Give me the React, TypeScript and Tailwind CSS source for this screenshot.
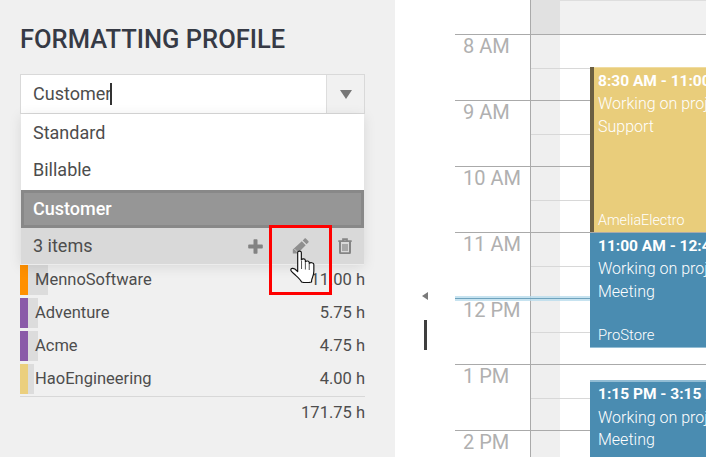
const rows = [
  { name: "MennoSoftware", hours: "11.00 h", color: "bg-[#ff9000]", gray: "w-[28px]" },
  { name: "Adventure", hours: "5.75 h", color: "bg-[#8a5aa8]", gray: "w-[18px]" },
  { name: "Acme", hours: "4.75 h", color: "bg-[#8a5aa8]", gray: "w-[18px]" },
  { name: "HaoEngineering", hours: "4.00 h", color: "bg-[#ebcf7e]", gray: "w-[14px]" },
];

const hours = ["8 AM", "9 AM", "10 AM", "11 AM", "12 PM", "1 PM", "2 PM"];

function Hand() {
  return (
    <svg viewBox="0 0 26 33" preserveAspectRatio="none" className="absolute left-[290px] top-[250px] w-[25px] h-[33px] z-30">
      <path
        d="M8 2.500C8 .6 11.800 .6 11.800 2.500V10C12.500 8.500 15.800 8.500 16 10.500V12C16.800 10.500 19.700 10.700 20 12.500V13.500C21 12.200 24.800 12.500 24.800 14.500V21C24.800 25 23.500 27 22.800 29C22.500 30 22.400 31 22.400 32C19 32.800 15 32.800 12 32C11 29.500 8.500 27.500 5.500 25C3.500 23.300 .8 21.500 .8 19.800C1 18 3.500 18 5 19L8 21.500Z"
        fill="#fff"
        stroke="#111"
        strokeWidth="1.200"
        strokeLinejoin="round"
      />
      <path d="M12 11v8M16 12.500v7M20 14v6" stroke="#222" strokeWidth="0.800" fill="none" />
    </svg>
  );
}

function PlusIcon() {
  return (
    <svg viewBox="0 0 15 15" className="w-[15px] h-[15px] shrink-0">
      <path d="M5.500 1a.8.8 0 0 1 .8-.8h2.400a.8.8 0 0 1 .8.8v4.500H14a.8.8 0 0 1 .8.8v2.400a.8.8 0 0 1-.8.8H9.500V14a.8.8 0 0 1-.8.8H6.300a.8.8 0 0 1-.8-.8V9.500H1a.8.8 0 0 1-.8-.8V6.300a.8.8 0 0 1 .8-.8h4.500Z" fill="#828282" />
    </svg>
  );
}

function PencilIcon() {
  return (
    <svg viewBox="0 0 17 16" className="w-[17px] h-[16px] shrink-0">
      <path d="M12.400 .7c.5-.5 1.200-.5 1.700 0l2.200 2.200c.5.5.5 1.200 0 1.700l-1.700 1.700-3.900-3.900zM9.800 3.300l3.900 3.900-8.200 8.200H.8v-3.900z" fill="#8f8f8f" />
      <path d="M2.300 10.900l3.900 3.900" stroke="#d9d9d9" strokeWidth="0.800" />
    </svg>
  );
}

function TrashIcon() {
  return (
    <svg viewBox="0 0 14 16" className="w-[14px] h-[16px] shrink-0">
      <path d="M.3 3.200h13.400M5 3V1.200h4V3" stroke="#858585" strokeWidth="1.700" fill="none" />
      <path d="M2 4v10.200c0 .6.500 1 1 1h8c.5 0 1-.4 1-1V4" stroke="#858585" strokeWidth="2" fill="none" />
      <path d="M5 6v7M7 6v7M9 6v7" stroke="#858585" strokeWidth="1.200" fill="none" />
    </svg>
  );
}

function Sidebar() {
  return (
    <div className="w-[395px] shrink-0 bg-[#f0f0f0] pl-[20px] pr-[30px] pt-[25px] h-full">
      <h1 className="text-[25.500px] leading-[28px] font-medium text-[#363a45] whitespace-nowrap">FORMATTING PROFILE</h1>
      <div className="mt-[21px] relative">
        <div className="flex h-[40px] border border-[#d9d9d9] bg-white">
          <div className="flex-1 pl-[12px] pb-[2px] flex items-center text-[18px] text-[#4d4d4d]">
            Customer<span className="w-[2px] h-[22px] bg-[#333] -ml-px mt-[2px]" />
          </div>
          <div className="w-[38px] border-l border-[#dddddd] bg-[#f1f1f1] flex items-center justify-center">
            <div className="w-0 h-0 border-l-[6px] border-r-[6px] border-t-[9px] border-l-transparent border-r-transparent border-t-[#777]" />
          </div>
        </div>
        <div className="absolute left-[1px] right-[1px] top-[40px] z-10 shadow-[0_2px_12px_rgba(0,0,0,0.10)] text-[18px] text-[#4d4d4d]">
          <div className="bg-white h-[76px]">
            <div className="h-[37px] pl-[12px] flex items-center">Standard</div>
            <div className="h-[36px] pl-[12px] flex items-center">Billable</div>
          </div>
          <div className="h-[38px] bg-[#969696] border-[3px] border-[#888888] pl-[9px] pb-[2px] flex items-center text-white font-medium">Customer</div>
          <div className="h-[37px] bg-[#d9d9d9] border-b border-[#ececec] pl-[12px] flex items-center">
            <span className="flex-1 pb-[2px]">3 items</span>
            <PlusIcon />
            <div className="ml-[29px]"><PencilIcon /></div>
            <div className="ml-[29px] mr-[12px]"><TrashIcon /></div>
          </div>
        </div>
      </div>
      <div className="mt-[149px] text-[16.500px] text-[#4d4d4d]">
        {rows.map((r) => (
          <div key={r.name} className="flex items-center h-[33px]">
            <div className="relative h-[30px] w-[28px] mt-[1px]">
              <div className={`absolute inset-y-0 left-0 bg-[#dcdcdc] ${r.gray}`} />
              <div className={`absolute inset-y-0 left-0 w-[8px] ${r.color}`} />
            </div>
            <span className="-ml-[13px] relative flex-1 mt-[2px]">{r.name}</span>
            <span className="mt-[2px]">{r.hours}</span>
          </div>
        ))}
        <div className="border-t border-[#d8d8d8] text-right pt-[3px] mt-[1px] leading-[26px]">171.75 h</div>
      </div>
    </div>
  );
}

function Calendar() {
  return (
    <div className="flex-1 relative bg-white pl-[60px] h-full overflow-hidden">
      <div className="h-[34px] flex">
        <div className="w-[75px]" />
        <div className="w-[30px] bg-[#e1e1e1] border-l border-[#aaaaaa]" />
        <div className="flex-1 bg-[#f1f1f1] border-t border-[#dedede]" />
      </div>
      {hours.map((h) => (
        <div key={h} className="h-[66px] flex border-t border-[#aaaaaa]">
          <div className="w-[75px] pl-[8px] text-[20px] leading-[22px] text-[#b0b0b0]">{h}</div>
          <div className="flex-1 flex flex-col">
            {[0, 1].map((i) => (
              <div key={i} className="h-[33px] flex border-l border-[#aaaaaa]">
                <div className={`w-[29px] bg-[#efefef] ${i === 1 ? "border-t border-[#d8d8d8]" : ""}`} />
                <div className={`flex-1 ${i === 1 ? "border-t border-[#d8d8d8]" : ""}`} />
              </div>
            ))}
          </div>
        </div>
      ))}
      <div className="absolute left-[60px] right-0 top-[296px] h-[5px] bg-[#b9dcec]/80" />
      <div className="absolute left-[60px] right-0 top-[298px] h-px bg-[#6fa3bd]" />
      <div className="absolute left-[27px] top-[292px] w-0 h-0 border-y-[4px] border-r-[6px] border-y-transparent border-r-[#7a7a7a]" />
      <div className="absolute left-[29px] top-[320px] w-[3px] h-[30px] bg-[#3f3f3f]" />

      <div className="absolute left-[195px] right-0 top-[67px] h-[165px] bg-[#e9cd7b] border-l-[4px] border-[#6b5f42] text-white text-[16px] overflow-hidden whitespace-nowrap">
        <div className="h-px bg-[#f0dca0] -ml-[4px]" />
        <div className="pl-[4px] pt-[2px] font-bold text-[15.500px] leading-[23px]">8:30 AM - 11:00 AM</div>
        <div className="pl-[4px] leading-[23px] font-light -mt-px">Working on project</div>
        <div className="pl-[4px] leading-[23px] font-light">Support</div>
        <div className="pl-[4px] leading-[22px] mt-[71px] text-[14.300px] font-light">AmeliaElectro</div>
      </div>
      <div className="absolute left-[195px] right-0 top-[233px] h-[115px] bg-[#4a8cb1] border-b border-[#93bdd4] text-white text-[16px] overflow-hidden whitespace-nowrap">
        <div className="pl-[8px] pt-[2px] font-bold text-[15.500px] leading-[23px]">11:00 AM - 12:45 PM</div>
        <div className="pl-[8px] leading-[23px] font-light -mt-px">Working on project</div>
        <div className="pl-[8px] leading-[23px] font-light">Meeting</div>
        <div className="pl-[8px] leading-[22px] mt-[21px] text-[14.800px] font-light">ProStore</div>
      </div>
      <div className="absolute left-[195px] right-0 top-[380px] h-[90px] bg-[#4a8cb1] border-t-[2px] border-[#93bdd4] text-white text-[16px] overflow-hidden whitespace-nowrap">
        <div className="pl-[8px] pt-[1px] font-bold text-[15.500px] leading-[23px]">1:15 PM - 3:15 PM</div>
        <div className="pl-[8px] leading-[23px] font-light">Working on project</div>
        <div className="pl-[8px] leading-[22px] font-light">Meeting</div>
      </div>
    </div>
  );
}

export default function App() {
  return (
    <div className="relative w-[706px] h-[457px] overflow-hidden flex font-['Roboto',sans-serif]">
      <Sidebar />
      <Calendar />
      <div className="absolute left-[269px] top-[225px] w-[63px] h-[70px] border-[3px] border-[#ff0000] z-20" />
      <Hand />
    </div>
  );
}
